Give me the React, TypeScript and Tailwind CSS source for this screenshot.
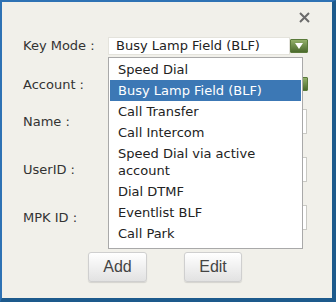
import React from 'react';

const options = [
  'Speed Dial',
  'Busy Lamp Field (BLF)',
  'Call Transfer',
  'Call Intercom',
  'Speed Dial via active account',
  'Dial DTMF',
  'Eventlist BLF',
  'Call Park',
];

const GreenArrow = () => (
  <div className="w-[18px] h-[14px] shrink-0 flex items-center justify-center bg-gradient-to-b from-[#93b06a] to-[#4b6a2c] border border-[#5a7a3a] rounded-[1px]">
    <svg width="8" height="6" viewBox="0 0 8 6">
      <path d="M0 0 H8 L4 6 Z" fill="#ffffff" />
    </svg>
  </div>
);

const Field = ({ label, mt, children }: { label: string; mt: string; children: React.ReactNode }) => (
  <div className={`flex items-center ${mt}`}>
    <div className="w-[106px] shrink-0 pl-[21px] whitespace-nowrap text-[13px] text-[#333]">{label}</div>
    {children}
  </div>
);

const TextInput = () => (
  <div className="w-[199px] h-[25px] shrink-0 bg-white border border-[#c9c9c4]" />
);

export default function App() {
  return (
    <div className="w-[336px] h-[302px] bg-white" style={{ fontFamily: '"DejaVu Sans", Verdana, sans-serif' }}>
      <div className="relative h-[302px] bg-[#f1f0ea] border-l-2 border-t-2 border-l-[#2e72b4] border-t-[#2e72b4] border-r-4 border-b-4 border-r-[#1d5a8c] border-b-[#1d5a8c]">
        <div className="h-[34px] flex justify-end items-start pt-[10px] pr-[22px]">
          <svg width="11" height="11" viewBox="0 0 11 11">
            <path d="M1 1 L10 10 M10 1 L1 10" stroke="#6b6b6b" strokeWidth="2" />
          </svg>
        </div>

        <Field label="Key Mode :" mt="mt-0">
          <div className="flex items-center h-[19px]">
            <div className="w-[182px] h-[18px] shrink-0 bg-white border border-[#e4e3dc] flex items-center pl-[7px] text-[13px] text-[#222] whitespace-nowrap">
              Busy Lamp Field (BLF)
            </div>
            <GreenArrow />
          </div>
        </Field>

        <Field label="Account :" mt="mt-[19px]">
          <div className="flex items-center h-[19px]">
            <div className="w-[182px] h-[18px] shrink-0 bg-white border border-[#e4e3dc]" />
            <GreenArrow />
          </div>
        </Field>

        <Field label="Name :" mt="mt-[15px]">
          <TextInput />
        </Field>
        <Field label="UserID :" mt="mt-[23px]">
          <TextInput />
        </Field>
        <Field label="MPK ID :" mt="mt-[23px]">
          <TextInput />
        </Field>

        <div className="flex mt-[22px] pl-[86px] gap-[37px]" style={{ fontFamily: '"Liberation Sans", Arial, sans-serif' }}>
          <button className="w-[59px] h-[30px] rounded-[3px] border border-[#cfcfcf] bg-gradient-to-b from-white to-[#e2e2e2] text-[16px] text-[#444] shadow-[0_1px_1px_rgba(0,0,0,0.12)]">
            Add
          </button>
          <button className="w-[58px] h-[30px] rounded-[3px] border border-[#cfcfcf] bg-gradient-to-b from-white to-[#e2e2e2] text-[16px] text-[#444] shadow-[0_1px_1px_rgba(0,0,0,0.12)]">
            Edit
          </button>
        </div>

        <div className="absolute left-[106px] top-[55px] w-[195px] bg-white border border-[#a9a9a9] pt-[1px] pb-[4px] px-[1px]">
          {options.map((o, i) => (
            <div
              key={o}
              className={`pl-[8px] pr-[4px] py-[2px] text-[13px] leading-[17px] ${i === 1 ? 'bg-[#3c78b5] text-white' : 'text-[#222]'}`}
            >
              {o}
            </div>
          ))}
        </div>
      </div>
    </div>
  );
}
